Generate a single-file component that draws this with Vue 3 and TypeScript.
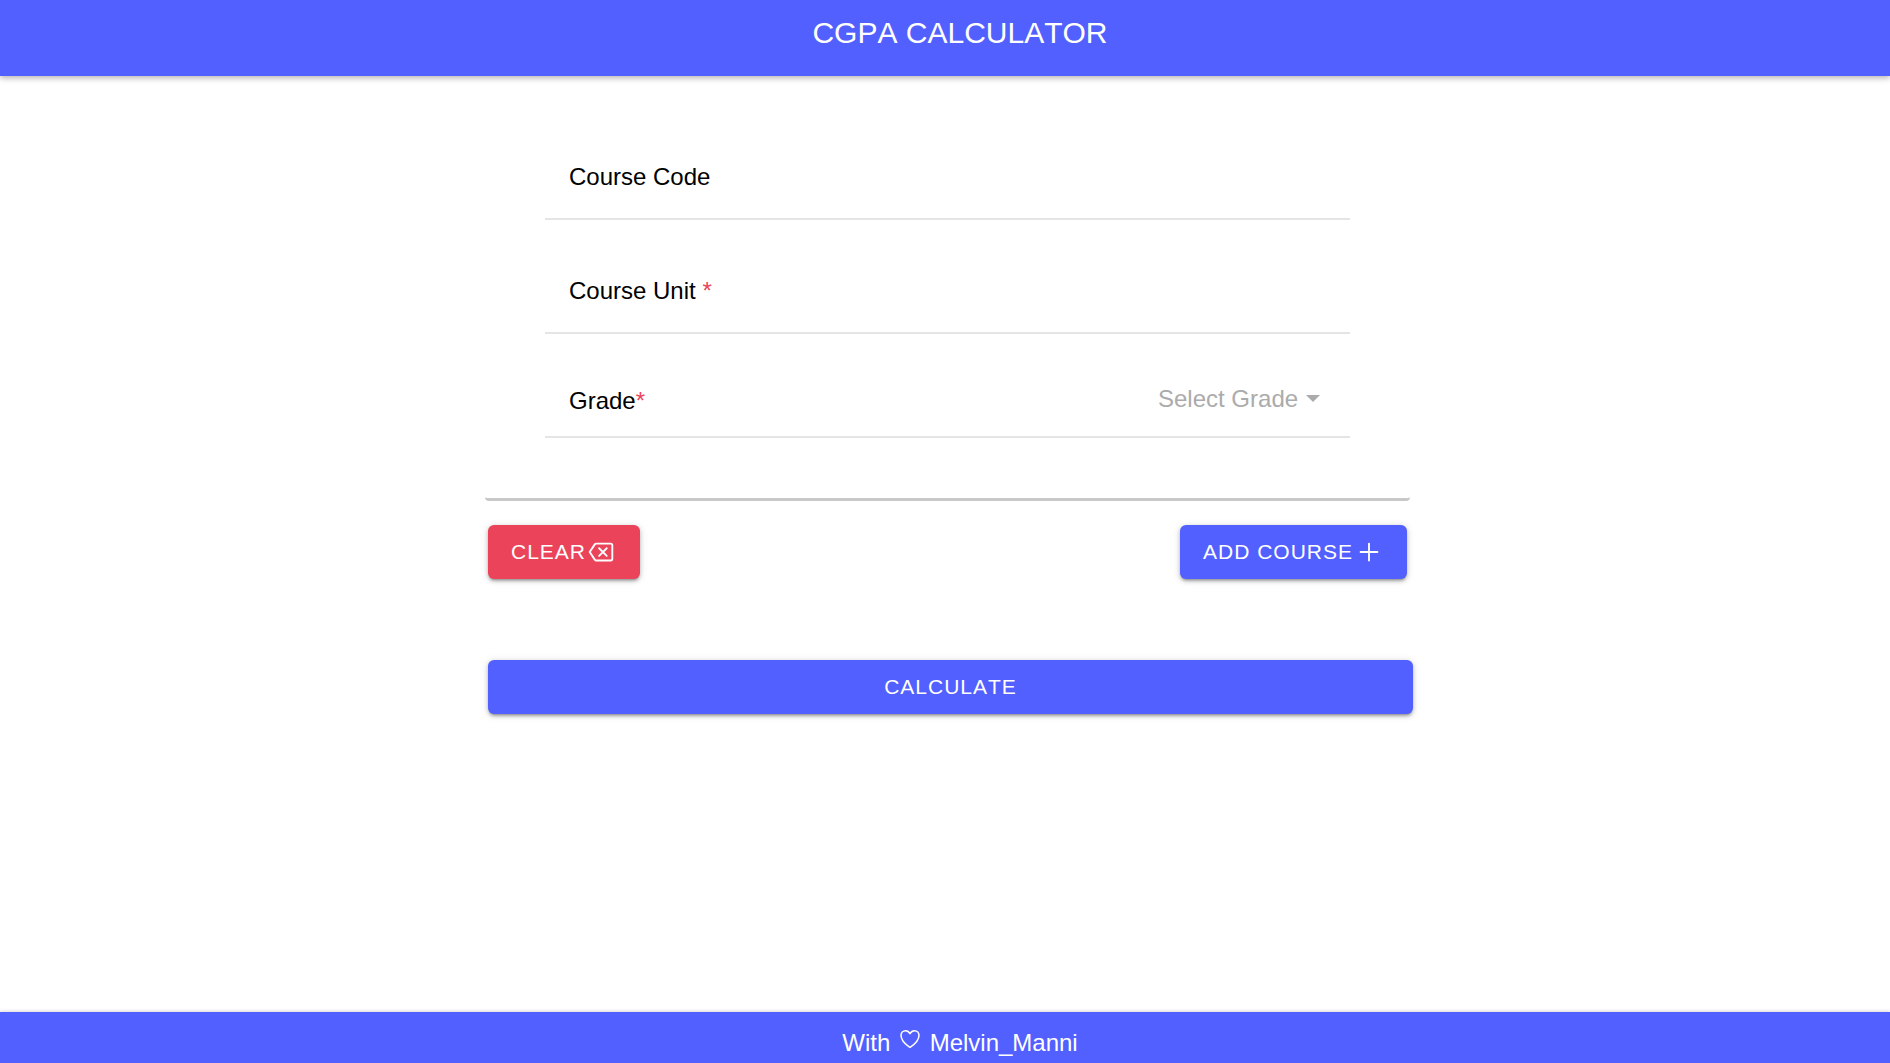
<script setup lang="ts">
import { ref } from 'vue'

interface Course {
  code: string
  unit: number
  grade: string
}

const points: Record<string, number> = { A: 5, B: 4, C: 3, D: 2, E: 1, F: 0 }

const code = ref('')
const unit = ref('')
const grade = ref('')
const courses = ref<Course[]>([])
const result = ref<string | null>(null)

function clearForm(): void {
  code.value = ''
  unit.value = ''
  grade.value = ''
}

function addCourse(): void {
  const units = Number(unit.value)
  if (!units || !grade.value) return
  courses.value.push({ code: code.value, unit: units, grade: grade.value })
  clearForm()
}

function calculate(): void {
  const total = courses.value.reduce((sum, c) => sum + c.unit, 0)
  if (!total) return
  const earned = courses.value.reduce((sum, c) => sum + c.unit * points[c.grade], 0)
  result.value = (earned / total).toFixed(2)
}
</script>

<template>
  <div class="page">
    <header class="header">
      <h1 class="title">CGPA CALCULATOR</h1>
    </header>

    <main class="main">
      <form class="content" @submit.prevent="addCourse">
        <div class="card">
          <div class="row">
            <label for="code">Course Code</label>
            <input id="code" v-model="code" type="text" />
          </div>
          <div class="row">
            <label for="unit">Course Unit <span class="required">*</span></label>
            <input id="unit" v-model="unit" type="text" inputmode="numeric" />
          </div>
          <div class="row row-select">
            <label for="grade">Grade<span class="required">*</span></label>
            <div class="picker">
              <select id="grade" v-model="grade">
                <option value="" disabled>Select Grade</option>
                <option v-for="(_, letter) in points" :key="letter" :value="letter">{{ letter }}</option>
              </select>
              <span class="caret"></span>
            </div>
          </div>
        </div>

        <div class="actions">
          <button type="button" class="button danger" @click="clearForm">
            CLEAR
            <svg class="icon" viewBox="0 0 512 512" aria-hidden="true">
              <path d="M135.19 390.14a28.79 28.79 0 0 0 21.68 9.86h246.26A29 29 0 0 0 432 371.13V140.87A29 29 0 0 0 403.13 112H156.87a28.84 28.84 0 0 0-21.67 9.84L46.33 256l88.86 134.11z" />
              <path d="M336.67 192.33L206.66 322.34M336.67 322.34L206.66 192.33" />
            </svg>
          </button>
          <button type="submit" class="button">
            ADD COURSE
            <svg class="icon" viewBox="0 0 512 512" aria-hidden="true">
              <path d="M256 112v288M400 256H112" />
            </svg>
          </button>
        </div>

        <button type="button" class="button calculate" @click="calculate">CALCULATE</button>
        <output v-if="result" class="result">{{ result }}</output>
      </form>
    </main>

    <footer class="footer">
      With
      <svg class="heart" viewBox="0 0 512 512" aria-hidden="true">
        <path d="M352.92 80C288 80 256 144 256 144s-32-64-96.92-64c-52.76 0-94.54 44.14-95.08 96.81-1.1 109.33 86.73 187.08 183 252.42a16 16 0 0 0 18 0c96.26-65.34 184.09-143.09 183-252.42-.54-52.67-42.32-96.81-95.08-96.81z" />
      </svg>
      Melvin_Manni
    </footer>
  </div>
</template>

<style>
body {
  margin: 0;
  background: #fff;
}
</style>

<style scoped>
.page {
  display: flex;
  flex-direction: column;
  min-height: 100vh;
  font-family: "Liberation Sans", Arial, sans-serif;
  font-size: 24px;
  line-height: 28px;
  font-kerning: none;
  color: #000;
}

.header {
  padding: 15px 0 25px 30px;
  background: #5260ff;
  color: #fff;
  text-align: center;
  box-shadow: 0 2px 6px rgba(0, 0, 0, 0.3);
}

.title {
  margin: 0;
  font-size: 30px;
  font-weight: 400;
  line-height: 36px;
}

.main {
  flex: 1;
  display: flex;
  justify-content: center;
  padding: 30px 0 30px 5px;
}

.content {
  width: min(925px, 100%);
}

.card {
  padding: 0 60px 60px;
  border-bottom: 3px solid #c8c8c8;
  border-radius: 4px;
}

.row {
  display: flex;
  align-items: flex-start;
  padding: 57px 24px 27px;
  border-bottom: 2px solid #e5e5e5;
}

.row-select {
  justify-content: space-between;
  padding: 53px 24px 21px;
}

.row input {
  flex: 1;
  min-width: 0;
  height: 28px;
  margin: 0 0 0 24px;
  padding: 0;
  border: 0;
  outline: 0;
  background: transparent;
  font: inherit;
}

.required {
  color: #eb445a;
}

.picker {
  display: flex;
  align-items: center;
  gap: 7px;
  height: 24px;
  padding-right: 6px;
}

.picker select {
  appearance: none;
  margin: 0;
  padding: 0;
  border: 0;
  outline: 0;
  background: transparent;
  font: inherit;
  color: #ababab;
}

.caret {
  margin-bottom: 2px;
  border: 7px solid transparent;
  border-top-color: #ababab;
  border-bottom: 0;
}

.actions {
  display: flex;
  justify-content: space-between;
  padding: 24px 3px 81px;
}

.button {
  display: flex;
  align-items: center;
  justify-content: center;
  gap: 1px;
  height: 54px;
  padding: 0 23px 1px;
  border: 0;
  border-radius: 6px;
  background: #5260ff;
  color: #fff;
  font: inherit;
  font-size: 21px;
  font-kerning: none;
  letter-spacing: 1px;
  box-shadow: 0 3px 3px -2px rgba(0, 0, 0, 0.3), 0 2px 4px rgba(0, 0, 0, 0.2), 0 1px 8px rgba(0, 0, 0, 0.12);
  cursor: pointer;
}

.danger {
  background: #eb445a;
}

.calculate {
  width: 100%;
  margin: 0 0 0 3px;
}

.result {
  display: block;
  margin-top: 24px;
  text-align: center;
}

.icon,
.heart {
  fill: none;
  stroke: currentColor;
  stroke-width: 32;
  stroke-linecap: round;
  stroke-linejoin: round;
}

.icon {
  width: 30px;
  height: 30px;
}

.heart {
  width: 24px;
  height: 24px;
  margin: -4px 1px 0;
}

.footer {
  padding: 17px 0 6px 30px;
  background: #5260ff;
  color: #fff;
  text-align: center;
  box-shadow: 0 -1px 3px rgba(0, 0, 0, 0.15);
}
</style>
